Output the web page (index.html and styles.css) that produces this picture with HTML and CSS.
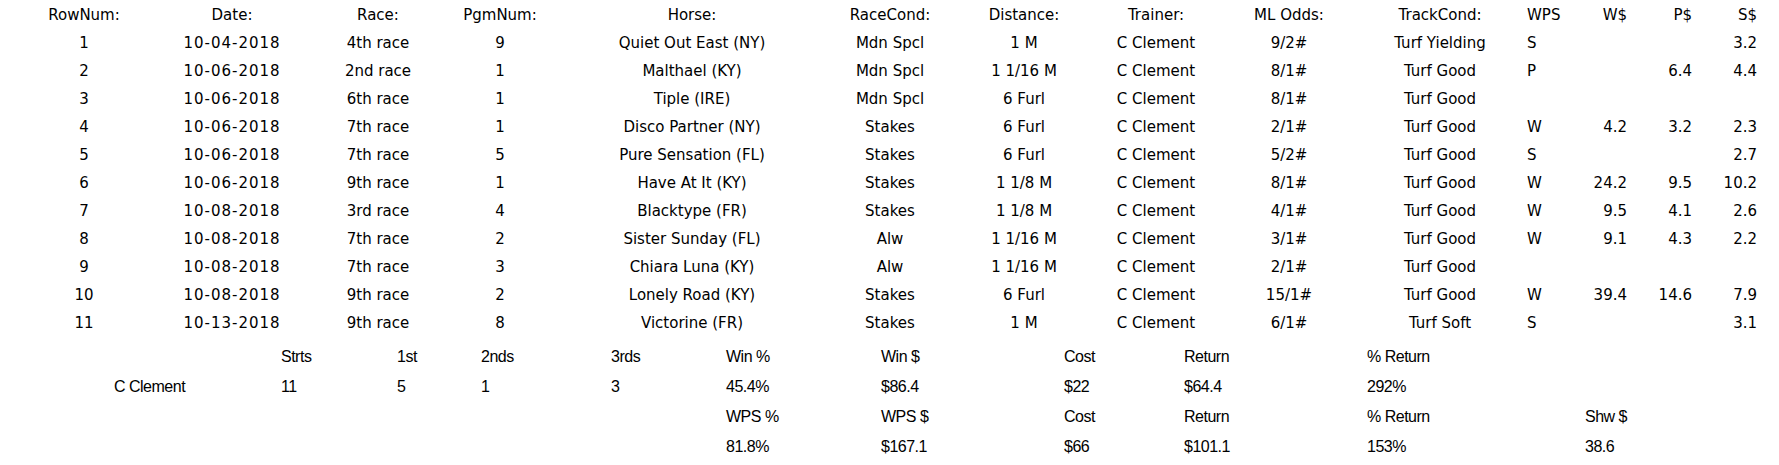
FILE: index.html
```html
<!DOCTYPE html>
<html>
<head>
<meta charset="utf-8">
<title>Trainer Report</title>
<link rel="stylesheet" href="styles.css">
</head>
<body>
<table class="races">
  <colgroup>
    <col class="c-row"><col class="c-date"><col class="c-race"><col class="c-pgm"><col class="c-horse"><col class="c-cond"><col class="c-dist"><col class="c-trainer"><col class="c-odds"><col class="c-track"><col class="c-wps"><col class="c-w"><col class="c-p"><col class="c-s"><col>
  </colgroup>
  <thead>
    <tr><th>RowNum:</th><th>Date:</th><th>Race:</th><th>PgmNum:</th><th>Horse:</th><th>RaceCond:</th><th>Distance:</th><th>Trainer:</th><th>ML Odds:</th><th>TrackCond:</th><th class="l">WPS</th><th class="r">W$</th><th class="r">P$</th><th class="r">S$</th><th></th></tr>
  </thead>
  <tbody>
    <tr><td>1</td><td class="date">10-04-2018</td><td>4th race</td><td>9</td><td>Quiet Out East (NY)</td><td>Mdn Spcl</td><td>1 M</td><td>C Clement</td><td>9/2#</td><td>Turf Yielding</td><td class="l">S</td><td class="r"></td><td class="r"></td><td class="r">3.2</td><td></td></tr>
    <tr><td>2</td><td class="date">10-06-2018</td><td>2nd race</td><td>1</td><td>Malthael (KY)</td><td>Mdn Spcl</td><td>1 1/16 M</td><td>C Clement</td><td>8/1#</td><td>Turf Good</td><td class="l">P</td><td class="r"></td><td class="r">6.4</td><td class="r">4.4</td><td></td></tr>
    <tr><td>3</td><td class="date">10-06-2018</td><td>6th race</td><td>1</td><td>Tiple (IRE)</td><td>Mdn Spcl</td><td>6 Furl</td><td>C Clement</td><td>8/1#</td><td>Turf Good</td><td class="l"></td><td class="r"></td><td class="r"></td><td class="r"></td><td></td></tr>
    <tr><td>4</td><td class="date">10-06-2018</td><td>7th race</td><td>1</td><td>Disco Partner (NY)</td><td>Stakes</td><td>6 Furl</td><td>C Clement</td><td>2/1#</td><td>Turf Good</td><td class="l">W</td><td class="r">4.2</td><td class="r">3.2</td><td class="r">2.3</td><td></td></tr>
    <tr><td>5</td><td class="date">10-06-2018</td><td>7th race</td><td>5</td><td>Pure Sensation (FL)</td><td>Stakes</td><td>6 Furl</td><td>C Clement</td><td>5/2#</td><td>Turf Good</td><td class="l">S</td><td class="r"></td><td class="r"></td><td class="r">2.7</td><td></td></tr>
    <tr><td>6</td><td class="date">10-06-2018</td><td>9th race</td><td>1</td><td>Have At It (KY)</td><td>Stakes</td><td>1 1/8 M</td><td>C Clement</td><td>8/1#</td><td>Turf Good</td><td class="l">W</td><td class="r">24.2</td><td class="r">9.5</td><td class="r">10.2</td><td></td></tr>
    <tr><td>7</td><td class="date">10-08-2018</td><td>3rd race</td><td>4</td><td>Blacktype (FR)</td><td>Stakes</td><td>1 1/8 M</td><td>C Clement</td><td>4/1#</td><td>Turf Good</td><td class="l">W</td><td class="r">9.5</td><td class="r">4.1</td><td class="r">2.6</td><td></td></tr>
    <tr><td>8</td><td class="date">10-08-2018</td><td>7th race</td><td>2</td><td>Sister Sunday (FL)</td><td>Alw</td><td>1 1/16 M</td><td>C Clement</td><td>3/1#</td><td>Turf Good</td><td class="l">W</td><td class="r">9.1</td><td class="r">4.3</td><td class="r">2.2</td><td></td></tr>
    <tr><td>9</td><td class="date">10-08-2018</td><td>7th race</td><td>3</td><td>Chiara Luna (KY)</td><td>Alw</td><td>1 1/16 M</td><td>C Clement</td><td>2/1#</td><td>Turf Good</td><td class="l"></td><td class="r"></td><td class="r"></td><td class="r"></td><td></td></tr>
    <tr><td>10</td><td class="date">10-08-2018</td><td>9th race</td><td>2</td><td>Lonely Road (KY)</td><td>Stakes</td><td>6 Furl</td><td>C Clement</td><td>15/1#</td><td>Turf Good</td><td class="l">W</td><td class="r">39.4</td><td class="r">14.6</td><td class="r">7.9</td><td></td></tr>
    <tr><td>11</td><td class="date">10-13-2018</td><td>9th race</td><td>8</td><td>Victorine (FR)</td><td>Stakes</td><td>1 M</td><td>C Clement</td><td>6/1#</td><td>Turf Soft</td><td class="l">S</td><td class="r"></td><td class="r"></td><td class="r">3.1</td><td></td></tr>
  </tbody>
</table>

<div class="summary">
  <span class="cell"></span><span class="cell">Strts</span><span class="cell">1st</span><span class="cell">2nds</span><span class="cell">3rds</span><span class="cell">Win %</span><span class="cell">Win $</span><span class="cell">Cost</span><span class="cell">Return</span><span class="cell">% Return</span><span class="cell"></span>
  <span class="cell">C Clement</span><span class="cell">11</span><span class="cell">5</span><span class="cell">1</span><span class="cell">3</span><span class="cell">45.4%</span><span class="cell">$86.4</span><span class="cell">$22</span><span class="cell">$64.4</span><span class="cell">292%</span><span class="cell"></span>
  <span class="cell"></span><span class="cell"></span><span class="cell"></span><span class="cell"></span><span class="cell"></span><span class="cell">WPS %</span><span class="cell">WPS $</span><span class="cell">Cost</span><span class="cell">Return</span><span class="cell">% Return</span><span class="cell">Shw $</span>
  <span class="cell"></span><span class="cell"></span><span class="cell"></span><span class="cell"></span><span class="cell"></span><span class="cell">81.8%</span><span class="cell">$167.1</span><span class="cell">$66</span><span class="cell">$101.1</span><span class="cell">153%</span><span class="cell">38.6</span>
</div>
</body>
</html>
```

FILE: styles.css
```css
html, body {
  margin: 0;
  padding: 0;
  background: #ffffff;
  color: #000000;
}

body {
  font-family: "DejaVu Sans", Verdana, sans-serif;
  font-size: 15px;
}

.races {
  table-layout: fixed;
  border-collapse: collapse;
  border-spacing: 0;
  width: 1779px;
  margin-top: 1px;
}

.races th,
.races td {
  padding: 0;
  height: 28px;
  line-height: 28px;
  font-weight: normal;
  text-align: center;
  white-space: nowrap;
  overflow: visible;
}

.races .date { letter-spacing: 1px; }
.races .l { text-align: left; padding-left: 25px; }
.races .r { text-align: right; }

.c-row { width: 168px; }
.c-date { width: 128px; }
.c-race { width: 164px; }
.c-pgm { width: 80px; }
.c-horse { width: 304px; }
.c-cond { width: 92px; }
.c-dist { width: 176px; }
.c-trainer { width: 88px; }
.c-odds { width: 178px; }
.c-track { width: 124px; }
.c-wps { width: 78px; }
.c-w { width: 47px; }
.c-p { width: 65px; }
.c-s { width: 65px; }

.summary {
  display: grid;
  grid-template-columns: 167px 116px 84px 130px 115px 155px 183px 120px 183px 218px auto;
  grid-auto-rows: 30px;
  padding-left: 114px;
  margin-top: 5px;
  font-family: "Liberation Sans", Arial, sans-serif;
  font-size: 16px;
  letter-spacing: -0.5px;
}

.summary .cell {
  line-height: 30px;
  white-space: nowrap;
}
```
